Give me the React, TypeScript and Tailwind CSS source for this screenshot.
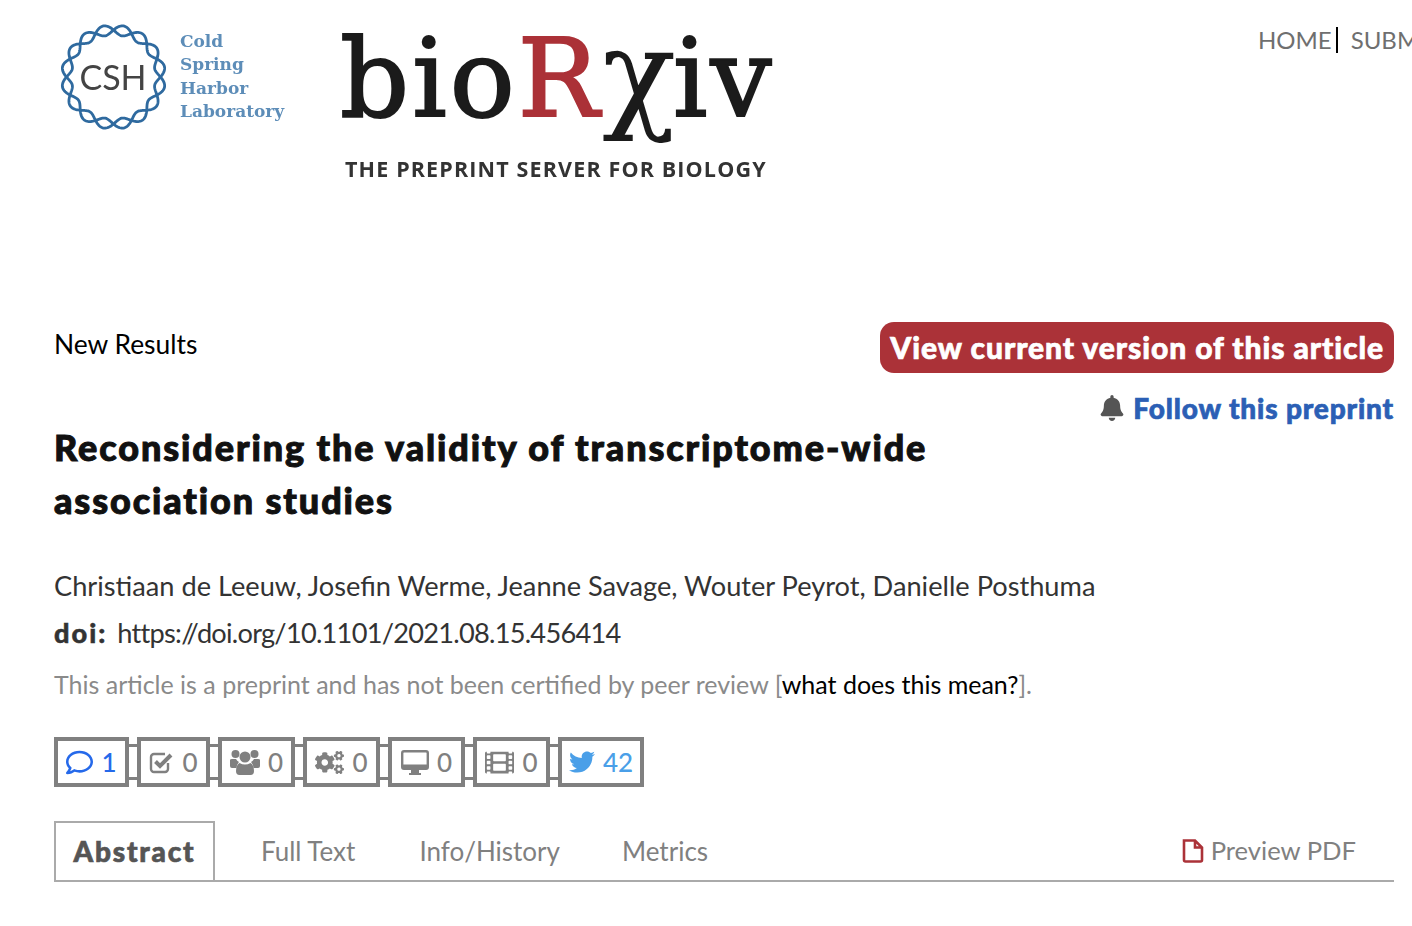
import { FaBell, FaCogs, FaFilm, FaRegComment, FaTwitter } from 'react-icons/fa'
import type { ReactNode } from 'react'

// two strands winding round the ring
function strand(phase: number) {
	const points: string[] = []
	for (let i = 0; i <= 360; i++) {
		const a = (i / 360) * Math.PI * 2
		const r = 47 + 5 * Math.sin(a * 8 + phase)
		points.push(`${(53.5 + r * Math.cos(a)).toFixed(2)},${(53 + r * Math.sin(a)).toFixed(2)}`)
	}
	return `M${points.join('L')}Z`
}

function CshLogo() {
	return (
		<div className="flex w-[282px] shrink-0 items-start pl-[60px] pt-[24px] blur-[0.5px]">
			<svg viewBox="0 0 107 106" className="h-[106px] w-[107px] shrink-0">
				<path d={strand(0)} fill="none" stroke="#2f6a9f" strokeWidth="2.8" />
				<path d={strand(Math.PI)} fill="none" stroke="#2f6a9f" strokeWidth="2.8" />
				<text x="53" y="66" textAnchor="middle" fontFamily="Lato, sans-serif" fontSize="34" fill="#444">
					CSH
				</text>
			</svg>
			<div className="ml-[13px] flex flex-col pt-[6px] font-['DejaVu_Serif',serif] text-[17px] leading-[23.4px] font-bold text-[#5d8db8]">
				<span>Cold</span>
				<span>Spring</span>
				<span>Harbor</span>
				<span>Laboratory</span>
			</div>
		</div>
	)
}

function BiorxivLogo() {
	return (
		<div className="ml-[60px] flex w-[430px] shrink-0 flex-col pt-[9px] blur-[0.5px]">
			<div className="ml-[-2px] flex h-[130px] items-baseline font-['DejaVu_Serif',serif] text-[108px] leading-[130px] tracking-[3px] text-[#1b1b1b] [-webkit-text-stroke:2px_#1b1b1b]">
				<span>bio</span>
				<span className="text-[#ab3137] [-webkit-text-stroke:2px_#ab3137]">R</span>
				<span className="text-[122px] leading-[130px] tracking-[-3px] [-webkit-text-stroke:0px_#1b1b1b]">χ</span>
				<span>iv</span>
			</div>
			<div className="mt-[17px] pl-[3px] font-['Open_Sans',sans-serif] text-[21.5px] leading-[26px] font-bold tracking-[1.15px] whitespace-nowrap text-[#333]">
				THE PREPRINT SERVER FOR BIOLOGY
			</div>
		</div>
	)
}

function CheckSquareIcon() {
	return (
		<svg viewBox="0 0 25 23" className="h-[23px] w-[25px] text-[#808080]">
			<path d="M19 12v6a3 3 0 0 1-3 3H5a3 3 0 0 1-3-3V6a3 3 0 0 1 3-3h11" fill="none" stroke="currentColor" strokeWidth="2.4" />
			<path d="M6.5 10.5 11 15 22 4" fill="none" stroke="currentColor" strokeWidth="4" />
		</svg>
	)
}

function UsersIcon() {
	return (
		<svg viewBox="0 0 30 26" className="h-[26px] w-[30px] fill-current">
			<circle cx="5.5" cy="5" r="4" />
			<circle cx="24.5" cy="5" r="4" />
			<circle cx="15" cy="8" r="5.5" />
			<path d="M0 11q0-1 2-1h4q1 2 3 3-2 2-2.500 6H2q-2 0-2-2zM30 11q0-1-2-1h-4q-1 2-3 3 2 2 2.500 6H28q2 0 2-2z" />
			<path d="M9.500 14q5.500 3 11 0 3.500 2 3.500 8 0 4-3.500 4h-11Q6 26 6 22q0-6 3.500-8z" />
		</svg>
	)
}

function DesktopIcon() {
	return (
		<svg viewBox="0 0 28 25" className="h-[25px] w-[28px] fill-current">
			<path fillRule="evenodd" d="M3 0h22a3 3 0 0 1 3 3v14a3 3 0 0 1-3 3H3a3 3 0 0 1-3-3V3a3 3 0 0 1 3-3zM3 2.500a.6.6 0 0 0-.6.6V14.500h23.200V3.100a.6.6 0 0 0-.6-.6z" />
			<path d="M10 20h8v3h2v2H8v-2h2z" />
		</svg>
	)
}

function Counter({ icon, label, className, width }: { icon: ReactNode; label: string; className: string; width: string }) {
	return (
		<div className={`flex h-[50px] items-center justify-center gap-[8px] border-[4px] border-[#808080] text-[26px] font-medium ${width} ${className}`}>
			{icon}
			<span>{label}</span>
		</div>
	)
}

function Link() {
	return <div className="h-[36px] w-[8px] border-y-[3px] border-[#808080]" />
}

export default function App() {
	return (
		<div className="h-[926px] w-[1412px] overflow-hidden bg-white font-['Lato',sans-serif]">
			<header className="flex h-[320px] items-start">
				<CshLogo />
				<BiorxivLogo />
				<nav className="ml-auto flex w-[154px] shrink-0 items-center overflow-hidden whitespace-nowrap pt-[24px] text-[24px] leading-[32px] text-[#6f6f6f]">
					<span>HOME</span>
					<span className="mr-[13px] ml-[4px] h-[26px] w-[2px] shrink-0 bg-black" />
					<span>SUBMIT</span>
				</nav>
			</header>

			<main className="px-[54px] pr-[18px]">
				<div className="flex items-start justify-between">
					<div className="pt-[8px] text-[26.400px] leading-[32px] text-black">New Results</div>
					<a className="mt-[2px] rounded-[14px] bg-[#ab3238] px-[10px] py-[7px] text-[30px] leading-[37px] font-black tracking-[0.93px] text-white [-webkit-text-stroke:0.7px_#fff]">
						View current version of this article
					</a>
				</div>
				<div className="mt-[19px] flex items-center justify-end gap-[8px]">
					<FaBell className="size-[26px] text-[#555]" />
					<span className="text-[28px] leading-[32px] font-black tracking-[0.85px] text-[#2b5fb5] [-webkit-text-stroke:0.7px_#2b5fb5]">Follow this preprint</span>
				</div>
				<h1 className="mt-[-3px] w-[900px] text-[36px] leading-[53px] font-black tracking-[1.9px] text-[#111] [-webkit-text-stroke:1px_#111]">
					Reconsidering the validity of transcriptome-wide association studies
				</h1>
				<p className="mt-[35px] text-[27.200px] leading-[47px] text-[#333]">
					Christiaan de Leeuw, Josefin Werme, Jeanne Savage, Wouter Peyrot, Danielle Posthuma
				</p>
				<p className="text-[27.200px] leading-[47px] text-[#333]">
					<b className="mr-[3px] font-black tracking-[2px] [-webkit-text-stroke:0.5px_#333]">doi:</b> <span className="tracking-[-0.75px]">https://doi.org/10.1101/2021.08.15.456414</span>
				</p>
				<p className="mt-[8px] text-[25px] leading-[40px] text-[#8a8a8a]">
					This article is a preprint and has not been certified by peer review [<span className="text-black">what does this mean?</span>].
				</p>

				<div className="mt-[33px] flex items-center">
					<Counter width="w-[75px]" className="text-[#2569ea]" icon={<FaRegComment className="size-[27px]" />} label="1" />
					<Link />
					<Counter width="w-[73px]" className="text-[#808080]" icon={<CheckSquareIcon />} label="0" />
					<Link />
					<Counter width="w-[77px]" className="text-[#808080]" icon={<UsersIcon />} label="0" />
					<Link />
					<Counter width="w-[77px]" className="text-[#808080]" icon={<FaCogs className="size-[29px]" />} label="0" />
					<Link />
					<Counter width="w-[77px]" className="text-[#808080]" icon={<DesktopIcon />} label="0" />
					<Link />
					<Counter width="w-[77px]" className="text-[#808080]" icon={<FaFilm className="size-[29px]" />} label="0" />
					<Link />
					<Counter width="w-[86px]" className="text-[#4a9fe8]" icon={<FaTwitter className="size-[26px]" />} label="42" />
				</div>

				<nav className="mt-[34px] flex h-[61px] items-stretch border-b-2 border-[#aaa] text-[26px] text-[#808080]">
					<div className="mb-[-2px] flex w-[161px] items-center justify-center border-2 border-[#aaa] pb-[2px] text-[28px] font-black tracking-[1.8px] text-[#555] [-webkit-text-stroke:0.7px_#555]">Abstract</div>
					<div className="ml-[46px] flex items-center pt-[2px]">Full Text</div>
					<div className="ml-[64px] flex items-center pt-[2px]">Info/History</div>
					<div className="ml-[62px] flex items-center pt-[2px]">Metrics</div>
					<div className="mr-[38px] ml-auto flex items-center gap-[7px] text-[25.600px]">
						<svg viewBox="0 0 22 24" className="h-[24px] w-[22px] text-[#ab3238]">
							<path d="M2 1.500h11l7 7V21a1.500 1.500 0 0 1-1.500 1.500h-15A1.500 1.500 0 0 1 2 21zM13 1.500V8.500h7" fill="none" stroke="currentColor" strokeWidth="2.600" />
						</svg>
						<span>Preview PDF</span>
					</div>
				</nav>
			</main>
		</div>
	)
}
